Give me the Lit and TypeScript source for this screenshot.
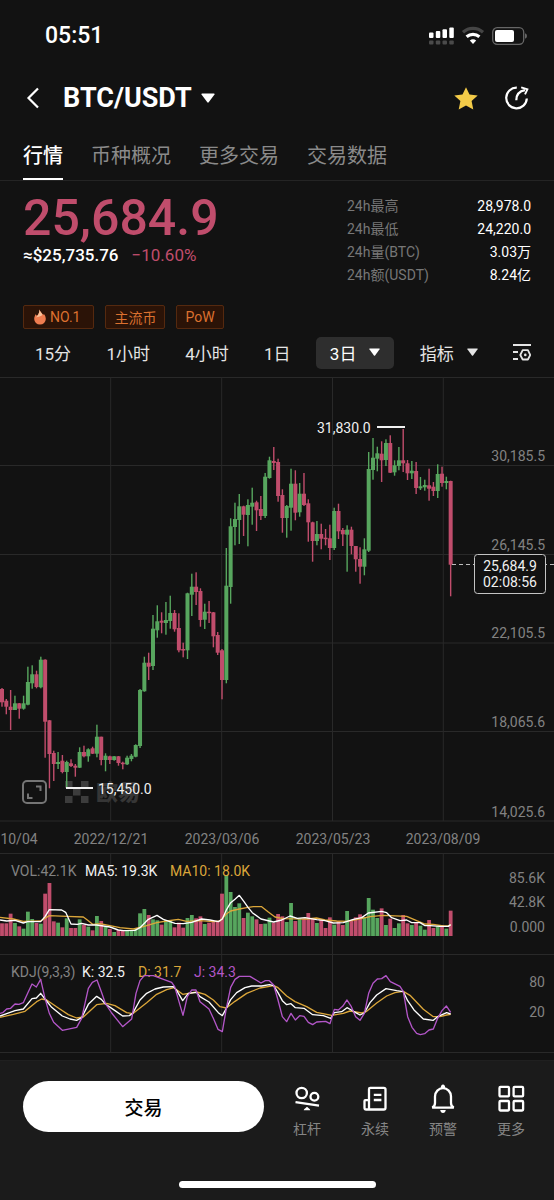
import { LitElement, html, svg, css } from "lit";
import { customElement, state } from "lit/decorators.js";
import { classMap } from "lit/directives/class-map.js";

type Dir = "u" | "d";

const STEP = 4.314;
const FIRST = 2;
const GRID_X = [110.7, 221.7, 332.5, 443.3];

// direction, high, body top, body bottom, low, volume bar top (volume in third-pixels)
const CANDLES: [Dir, number, number, number, number, number][] = [
  ["d", 688, 689, 702.3, 706.7, 220],
  ["d", 699, 700.7, 706.7, 714.3, 220],
  ["d", 690, 706.7, 710, 730, 191],
  ["u", 695.7, 703.3, 710, 710, 219],
  ["d", 703, 703.3, 708.7, 718.7, 229],
  ["u", 695.7, 703.3, 708.7, 709.7, 236],
  ["u", 666.7, 682, 704.7, 705.3, 185],
  ["u", 665.3, 674.3, 683.3, 688.7, 207],
  ["d", 670.7, 674.3, 687, 688.3, 219],
  ["u", 656.7, 659.7, 687.3, 688.3, 221],
  ["d", 659.3, 659.7, 721.7, 757.7, 131],
  ["d", 720, 720.3, 754, 788.3, 99],
  ["d", 750.7, 753, 764, 781, 214],
  ["u", 752, 762, 764, 769, 218],
  ["d", 755, 760.7, 772, 773.3, 232],
  ["u", 760.7, 762, 772, 787.7, 205],
  ["d", 759.3, 763.3, 766, 767, 234],
  ["d", 764, 765.7, 767.7, 776.7, 234],
  ["u", 747.3, 752, 767.7, 768, 208],
  ["d", 745.7, 752, 756.3, 757.3, 224],
  ["u", 748.3, 749.3, 756.3, 761.7, 230],
  ["d", 746.7, 748.3, 753.7, 754, 241],
  ["u", 724.7, 736.7, 753.7, 757.3, 198],
  ["d", 736.7, 736.7, 760, 765.3, 213],
  ["u", 753.3, 755.7, 760, 771.3, 231],
  ["d", 755.7, 756.3, 760, 764, 237],
  ["u", 756, 756.3, 760, 760.7, 246],
  ["d", 756, 756.3, 763, 765.7, 240],
  ["d", 761.7, 762.7, 764, 769.3, 241],
  ["u", 755.7, 757.7, 764.3, 765, 241],
  ["u", 754, 755.7, 759, 761.3, 241],
  ["u", 744.3, 745, 756.7, 757.3, 237],
  ["u", 689, 690, 746, 748, 190],
  ["u", 656.7, 662.7, 691.3, 691.7, 177],
  ["d", 652.7, 662.7, 666.7, 680, 195],
  ["u", 615, 628.7, 666, 670, 208],
  ["u", 605.3, 621.3, 630.3, 637.7, 211],
  ["d", 612.3, 620.7, 622.7, 633.3, 224],
  ["u", 602, 620, 623, 634.7, 210],
  ["u", 595.7, 613, 621, 628.7, 211],
  ["d", 610, 613, 629.3, 631.7, 232],
  ["d", 613.3, 628, 650.3, 652.3, 218],
  ["d", 642.7, 649, 650.3, 657.3, 233],
  ["u", 592.7, 593.3, 650.3, 659, 204],
  ["u", 573.7, 586.7, 594.7, 616, 195],
  ["d", 572.3, 586.7, 592, 605, 205],
  ["d", 588.3, 591, 620, 626.7, 199],
  ["u", 603.7, 611.7, 619.7, 629, 222],
  ["d", 601, 611.7, 613, 623, 218],
  ["d", 612, 612.3, 636.3, 647.3, 216],
  ["d", 632, 635, 652.7, 655, 216],
  ["d", 649, 650.3, 680, 699.3, 131],
  ["u", 548, 585.7, 680, 683.3, 75],
  ["u", 518.3, 526.3, 587, 603.7, 126],
  ["u", 502.7, 519, 527, 545.3, 171],
  ["u", 494, 506.3, 520, 544, 160],
  ["d", 505.7, 506.3, 514.7, 536, 204],
  ["u", 499.3, 505, 515, 546.3, 188],
  ["u", 487.7, 502.7, 506.7, 524.7, 199],
  ["d", 500.7, 502.3, 510.3, 531, 208],
  ["d", 496, 509, 516, 520, 222],
  ["u", 473, 476.7, 516, 518, 221],
  ["u", 456.7, 460.3, 478, 478.7, 203],
  ["d", 447, 461, 463, 470, 218],
  ["d", 458.7, 462, 496, 501.7, 192],
  ["d", 489.3, 495, 518, 532.7, 199],
  ["u", 505, 506, 518, 537.7, 216],
  ["u", 468.7, 483.7, 507.7, 530.7, 159],
  ["d", 470.3, 483.7, 512.7, 520.3, 213],
  ["u", 483, 493.7, 512.3, 516.7, 206],
  ["d", 473, 493.7, 505, 506, 206],
  ["d", 499.3, 503.3, 522.3, 541.7, 189],
  ["d", 521.7, 522.3, 541, 561.7, 205],
  ["u", 521, 534, 541, 545.3, 219],
  ["d", 523.7, 534, 538.7, 549.3, 209],
  ["d", 529, 537.7, 539, 545.3, 234],
  ["d", 524.7, 538.3, 548, 560, 202],
  ["u", 507.7, 511, 548, 550, 224],
  ["d", 503.7, 511, 531.3, 539, 213],
  ["d", 528, 530, 534.3, 546, 225],
  ["u", 525.3, 529.7, 534.7, 571.7, 183],
  ["d", 526.7, 529.7, 546, 554.3, 210],
  ["d", 546, 546, 559.3, 571.7, 202],
  ["d", 547.3, 559, 566.7, 583.7, 193],
  ["u", 538.3, 549.3, 566.7, 575.3, 201],
  ["u", 452, 469, 550.7, 552, 144],
  ["u", 438, 457.7, 470, 479.7, 179],
  ["u", 446.7, 453.3, 458.7, 471.3, 204],
  ["d", 441.3, 453.7, 460.3, 482, 175],
  ["u", 439.3, 443, 460, 466, 225],
  ["d", 435.3, 443, 472.7, 473, 206],
  ["u", 460.3, 465.3, 472.3, 475.7, 234],
  ["u", 447, 460.3, 466, 470.3, 220],
  ["d", 429, 460.3, 463.3, 472, 195],
  ["d", 460, 463.3, 473.3, 480, 220],
  ["u", 461, 470.7, 473.3, 479, 225],
  ["d", 462, 471, 488, 494, 216],
  ["u", 477, 486.3, 488.3, 490, 227],
  ["u", 479.7, 485, 487.3, 490.7, 239],
  ["d", 468.7, 485.3, 488.7, 500.7, 210],
  ["d", 482, 486.7, 491, 496, 234],
  ["u", 464.3, 474, 491, 498, 229],
  ["d", 466.7, 473.7, 483, 486.7, 225],
  ["u", 476.7, 481, 483, 489.3, 236],
  ["d", 480.7, 481, 564.7, 596.3, 182],
];

// Indicator lines, in third-pixels
const MA5 =
  "0,210 20,213 45,211 70,219 83,215 122,215 135,200 148,179 185,180 197,187 213,222 232,223 245,220 265,225 290,225 330,231 355,240 370,242 405,241 420,233 445,208 471,196 490,208 525,220 550,221 575,217 605,207 630,210 655,215 667,207 679,180 692,158 705,148 718,136 732,155 744,172 757,188 783,207 821,216 845,210 870,198 892,205 915,203 950,209 975,212 1000,219 1030,218 1060,208 1085,203 1105,189 1145,184 1160,188 1175,203 1200,212 1220,210 1235,218 1260,218 1275,227 1290,227 1320,229 1345,229 1352,224";
const MA10 =
  "0,202 40,207 70,214 122,213 148,197 200,199 250,201 262,210 278,223 300,221 330,227 360,233 400,237 430,230 470,218 500,213 535,208 560,214 600,212 640,215 660,213 679,192 692,183 718,177 740,173 760,170 785,170 805,186 825,201 850,206 920,207 950,204 975,210 1010,213 1040,214 1070,209 1110,200 1150,196 1220,199 1250,212 1275,222 1300,223 1330,228 1345,228 1352,224";
const K_LINE =
  "0,498 20,491 45,482 70,477 96,446 109,444 122,430 135,447 155,472 187,498 210,507 230,511 245,503 265,463 290,439 304,448 316,462 345,482 368,498 388,497 398,490 420,450 440,430 465,417 490,411 520,410 530,421 548,452 565,430 590,427 600,440 627,456 655,488 667,497 679,475 692,449 710,428 735,413 755,408 785,408 808,404 821,407 834,428 847,452 860,464 873,461 886,473 912,475 938,494 970,497 992,505 1003,488 1025,485 1041,473 1054,480 1067,488 1080,495 1093,489 1110,458 1130,435 1158,416 1190,422 1210,425 1223,452 1242,480 1270,507 1300,511 1313,500 1340,488 1352,492";
const D_LINE =
  "0,502 40,493 75,484 110,455 125,447 140,450 175,474 205,494 230,504 250,501 290,464 320,460 345,467 380,488 398,491 440,458 470,433 500,419 522,413 548,433 590,426 615,433 640,450 660,470 679,474 705,454 740,430 780,414 821,407 834,413 860,438 885,455 920,470 950,487 995,496 1030,490 1050,483 1085,489 1100,484 1130,459 1160,438 1185,428 1210,424 1230,436 1270,478 1300,500 1320,500 1340,495 1352,493";
const J_LINE =
  "0,490 8,488 20,477 32,475 45,462 57,463 70,458 83,430 96,402 109,411 122,388 135,445 148,490 161,517 187,541 230,532 245,505 265,415 277,397 291,390 304,425 316,460 335,489 368,530 395,507 408,430 420,392 433,377 460,377 515,397 524,410 537,455 549,496 562,440 575,420 588,420 600,455 627,477 640,505 654,538 667,545 679,475 692,412 705,388 718,379 750,379 783,399 796,392 808,392 821,405 834,450 847,500 860,515 873,490 886,510 899,497 912,499 925,517 938,524 950,516 977,514 990,521 1003,478 1015,480 1028,469 1041,450 1054,470 1067,500 1080,511 1093,490 1106,430 1119,400 1132,387 1145,386 1158,377 1171,395 1200,409 1210,425 1223,500 1236,532 1250,550 1261,554 1274,551 1287,540 1300,537 1313,505 1326,482 1339,468 1352,487";

@customElement("market-charts")
export class MarketCharts extends LitElement {
  static styles = css`
    :host {
      display: block;
    }
    .chart {
      display: block;
      width: 100%;
      font-family: Roboto, "Noto Sans CJK SC", sans-serif;
      font-size: 14px;
    }
    .grid {
      stroke: #292929;
      stroke-width: 1;
    }
    .u {
      fill: #57a65e;
    }
    .d {
      fill: #c04d6c;
    }
    .axis,
    .muted {
      fill: #828282;
    }
    .axis {
      text-anchor: end;
    }
    .date {
      fill: #828282;
      text-anchor: middle;
    }
    .light {
      fill: #f0f0f0;
    }
    .tag {
      fill: #f0f0f0;
      text-anchor: middle;
    }
    .pointer {
      stroke: #f0f0f0;
      stroke-width: 2;
    }
    .dash {
      stroke: #bdbdbd;
      stroke-dasharray: 4 3;
    }
    .tag-box {
      fill: #121212;
      stroke: #c4c4c4;
    }
    .mark {
      fill: #3c3c3c;
    }
    .mark-text {
      fill: #363636;
      font-size: 22px;
      font-weight: 900;
    }
    .expand {
      fill: none;
      stroke: #757575;
      stroke-width: 2;
    }
    .line {
      fill: none;
      stroke-width: 4;
      stroke-linejoin: round;
    }
    .white {
      stroke: #fff;
    }
    .gold {
      stroke: #dba63a;
    }
    .violet {
      stroke: #b356c8;
    }
    .gold-text {
      fill: #dba63a;
    }
    .violet-text {
      fill: #b356c8;
    }
  `;

  private columns(top: number, bottom: number) {
    return GRID_X.map((x) => svg`<line class="grid" x1=${x} x2=${x} y1=${top} y2=${bottom} />`);
  }

  private row(y: number) {
    return svg`<line class="grid" x1="0" x2="554" y1=${y} y2=${y} />`;
  }

  private priceChart() {
    const checks = [[0, 0], [2, 0], [1, 1], [0, 2], [2, 2]];
    const levels: [string, number][] = [
      ["30,185.5", 461], ["26,145.5", 550], ["22,105.5", 638], ["18,065.6", 727], ["14,025.6", 817],
    ];
    const dates: [string, number][] = [
      ["10/04", 19], ["2022/12/21", 111], ["2023/03/06", 222], ["2023/05/23", 333], ["2023/08/09", 443],
    ];
    return html`<svg class="chart" viewBox="0 377 554 476" role="img" aria-label="BTC/USDT 3日 K线">
      ${[377.5, 465.5, 554.5, 643, 731.5, 821].map((y) => this.row(y))}
      ${this.columns(377, 821)}
      ${checks.map(([c, r]) => svg`<rect class="mark" x=${65 + c * 8} y=${781 + r * 7.5} width="7.5" height="7" />`)}
      <text class="mark-text" x="96" y="800">欧易</text>
      ${CANDLES.map(([dir, high, top, bottom, low], i) => {
        const x = FIRST + i * STEP;
        return svg`<rect class=${dir} x=${x - 0.7} y=${high} width="1.4" height=${low - high} />
          <rect class=${dir} x=${x - 2} y=${top} width="4" height=${Math.max(bottom - top, 1.5)} />`;
      })}
      <g class="expand">
        <rect x="23" y="781" width="23" height="22" rx="4" />
        <path d="M36 786.500h4.500v4.500M28 793.500v4.500h4.500" />
      </g>
      <line class="pointer" x1="66" x2="93" y1="788" y2="788" />
      <text class="light" x="98" y="794">15,450.0</text>
      <text class="light" x="317" y="433">31,830.0</text>
      <line class="pointer" x1="377" x2="405" y1="427" y2="427" />
      ${levels.map(([t, y]) => svg`<text class="axis" x="545" y=${y}>${t}</text>`)}
      <line class="dash" x1="452" x2="554" y1="564.5" y2="564.5" />
      <rect class="tag-box" x="474.500" y="554.500" width="71" height="39" rx="3" />
      <text class="tag" x="510" y="571">25,684.9</text>
      <text class="tag" x="510" y="587">02:08:56</text>
      ${dates.map(([t, x]) => svg`<text class="date" x=${x} y="844">${t}</text>`)}
    </svg>`;
  }

  private volumeChart() {
    return html`<svg class="chart" viewBox="0 853 554 101" role="img" aria-label="成交量">
      ${this.row(853.5)} ${this.columns(853, 954)}
      <text class="muted" x="11" y="876">VOL:42.1K</text>
      <text class="light" x="85" y="876">MA5: 19.3K</text>
      ${CANDLES.map(
        ([dir, , , , , top], i) =>
          svg`<rect class=${dir} x=${FIRST + i * STEP - 1.9} y=${850 + top / 3} width="3.8" height=${(258 - top) / 3} />`,
      )}
      <text class="gold-text" x="170" y="876">MA10: 18.0K</text>
      <g transform="translate(0 850) scale(0.33333)">
        <polyline class="line gold" points=${MA10} />
        <polyline class="line white" points=${MA5} />
      </g>
      <text class="axis" x="545" y="883">85.6K</text>
      <text class="axis" x="545" y="907">42.8K</text>
      <text class="axis" x="545" y="932">0.000</text>
    </svg>`;
  }

  private kdjChart() {
    return html`<svg class="chart" viewBox="0 954 554 106" role="img" aria-label="KDJ">
      ${this.row(954.5)} ${this.row(1052.5)} ${this.columns(954, 1053)}
      <text class="muted" x="11" y="977">KDJ(9,3,3)</text>
      <text class="light" x="82" y="977">K: 32.5</text>
      <text class="gold-text" x="138" y="977">D: 31.7</text>
      <text class="violet-text" x="194" y="977">J: 34.3</text>
      <g transform="translate(0 850) scale(0.33333)">
        <polyline class="line gold" points=${D_LINE} />
        <polyline class="line white" points=${K_LINE} />
        <polyline class="line violet" points=${J_LINE} />
      </g>
      <text class="axis" x="545" y="987">80</text>
      <text class="axis" x="545" y="1017">20</text>
    </svg>`;
  }

  render() {
    return html`${this.priceChart()}${this.volumeChart()}${this.kdjChart()}`;
  }
}

@customElement("app-root")
export class AppRoot extends LitElement {
  static styles = css`
    :host {
      display: flex;
      flex-direction: column;
      min-height: 100vh;
      background: #121212;
      color: #fff;
      font-family: Roboto, "Noto Sans CJK SC", sans-serif;
    }
    * {
      box-sizing: border-box;
    }
    button {
      padding: 0;
      border: 0;
      background: none;
      color: inherit;
      font: inherit;
      cursor: pointer;
    }
    svg {
      display: block;
    }
    .status {
      display: flex;
      align-items: center;
      height: 72px;
      padding: 0 27px 0 45px;
    }
    .clock {
      flex: 1;
      font-size: 23px;
      font-weight: 500;
      line-height: 28px;
    }
    .header {
      display: flex;
      align-items: center;
      height: 52px;
      padding: 0 25px 0 26px;
    }
    .pair {
      display: flex;
      align-items: center;
      gap: 9px;
      margin-left: 23px;
      font-size: 27px;
      font-weight: 700;
      line-height: 32px;
    }
    .title {
      margin: 0;
      font: inherit;
    }
    .spacer {
      flex: 1;
    }
    .fav {
      margin-right: 26px;
    }
    .tabs {
      display: flex;
      gap: 28px;
      height: 57px;
      padding: 0 23px;
      border-bottom: 1px solid #242424;
    }
    .tab {
      height: 56px;
      padding-top: 6px;
      border-bottom: 2px solid transparent;
      color: #8a8a8a;
      font-size: 20px;
    }
    .tab.on {
      border-color: #fff;
      color: #fff;
      font-weight: 500;
    }
    .quote {
      display: flex;
      justify-content: space-between;
      padding: 12px 23px 0;
    }
    .price {
      color: #c04d6c;
      font-size: 50px;
      font-weight: 500;
      line-height: 50px;
    }
    .sub {
      display: flex;
      gap: 13px;
      font-size: 17px;
      font-weight: 500;
      line-height: 24px;
    }
    .change {
      color: #c04d6c;
      font-weight: 400;
    }
    .stats {
      display: grid;
      grid-template-columns: 1fr auto;
      width: 184px;
      margin: 0;
      padding-top: 2px;
      font-size: 14px;
      line-height: 23px;
    }
    .stats dt {
      color: #777;
    }
    .stats dd {
      margin: 0;
      text-align: right;
    }
    .badges {
      display: flex;
      gap: 11px;
      padding: 18px 23px 0;
    }
    .badge {
      display: flex;
      align-items: center;
      gap: 4px;
      height: 24px;
      padding: 0 8px;
      border: 1px solid #55290f;
      border-radius: 2px;
      background: #2b1307;
      color: #dc712f;
      font-size: 14px;
    }
    .badge.rank {
      padding: 0 13px 0 10px;
    }
    .frames {
      display: flex;
      align-items: center;
      justify-content: space-between;
      height: 48px;
      padding: 0 23px 0 35px;
      color: #e4e4e4;
      font-size: 17px;
    }
    .frame {
      display: flex;
      align-items: center;
      gap: 13px;
      height: 32px;
      padding-bottom: 2px;
    }
    .frame.on {
      margin: 0 -10px;
      padding: 0 14px 2px;
      border-radius: 5px;
      background: #2e2e2e;
      color: #fff;
    }
    .dock {
      display: flex;
      flex: 1;
      flex-direction: column;
      align-items: center;
      justify-content: space-between;
      padding: 20px 0 12px;
      border-top: 1px solid #202020;
      background: #1b1b1b;
    }
    .actions {
      display: flex;
      align-items: flex-start;
      width: 100%;
      padding: 0 9px 0 23px;
    }
    .trade {
      flex: 1;
      height: 51px;
      margin-right: 9px;
      border-radius: 26px;
      background: #fff;
      color: #000;
      font-size: 19px;
      font-weight: 500;
    }
    .action {
      display: flex;
      flex-direction: column;
      align-items: center;
      gap: 5px;
      width: 68px;
      padding-top: 2px;
      color: #858585;
      font-size: 14px;
      line-height: 20px;
    }
    .home {
      width: 197px;
      height: 7px;
      border-radius: 4px;
      background: #fff;
    }
  `;

  @state() private tab = "行情";
  @state() private frame = "3日";

  private caret(w: number, h: number) {
    return html`<svg width=${w} height=${h} viewBox="0 0 14 10" aria-hidden="true">
      <path fill="currentColor" d="M1 0.500h12q1 0 .5.900L7.700 9.300q-.7.900-1.400 0L.5 1.400Q0 .5 1 .5z" />
    </svg>`;
  }

  private statusIcons() {
    return html`<svg width="100" height="20" viewBox="0 0 100 20" aria-hidden="true">
      <g fill="#fff">
        <rect x="2" y="6.500" width="4.500" height="5.500" rx="1" />
        <rect x="8.800" y="5" width="4.500" height="7" rx="1" />
        <rect x="15.500" y="3.200" width="4.500" height="8.800" rx="1" />
        <rect x="22.300" y="1.500" width="4.500" height="10.500" rx="1" />
      </g>
      <g fill="#4a4a4a">
        <rect x="2" y="14.500" width="4.500" height="4" rx="1" />
        <rect x="8.800" y="14.500" width="4.500" height="4" rx="1" />
        <rect x="15.500" y="14.500" width="4.500" height="4" rx="1" />
        <rect x="22.300" y="14.500" width="4.500" height="4" rx="1" />
      </g>
      <path d="M36 6.200a15 15 0 0 1 20 0" fill="none" stroke="#454545" stroke-width="3.200" />
      <path d="M39.600 10.700a10 10 0 0 1 12.800 0" fill="none" stroke="#fff" stroke-width="3.200" />
      <path d="M42.800 14.500a5.200 5.200 0 0 1 6.400 0L46 18z" fill="#fff" />
      <rect x="65.700" y="1.700" width="31" height="16.600" rx="4.500" fill="none" stroke="#666" stroke-width="1.300" />
      <rect x="68" y="4" width="19" height="12" rx="2" fill="#fff" />
      <path d="M98 7.200q2 .8 2 2.800t-2 2.800z" fill="#666" />
    </svg>`;
  }

  private actionIcon(name: string) {
    const shapes: Record<string, unknown> = {
      杠杆: svg`<circle cx="8.700" cy="10" r="5.200" /><circle cx="21.400" cy="13.800" r="3.900" />
        <path d="M2.500 19.200l23.500 3.400" /><path d="M10.700 27.300q.2-1 1.300-1.800l2-1.800 2 1.800q1.100.8 1.300 1.800z" fill="#fff" stroke="none" />`,
      永续: svg`<path d="M8 26.500V6q0-1.200 1.200-1.200h13.600Q24.500 4.800 24.500 6.500v18.300q0 1.700-1.700 1.700H5.200q-1.700 0-1.700-1.700V18q0-.8.8-.8H8M12.800 11.800h7.600M12.800 17h7.600" />`,
      预警: svg`<path d="M3.200 24.600q2.800-1.200 2.800-4.500V13.500a8 8.300 0 0 1 16 0v6.600q0 3.300 2.800 4.500z" />
        <path d="M11.800 5q0-3.500 2.200-3.500T16.200 5zM11.200 27h5.600q-.5 3-2.800 3t-2.800-3z" fill="#fff" stroke="none" />`,
      更多: svg`<rect x="2.500" y="3.900" width="9.500" height="9.500" rx="1" /><rect x="16.600" y="3.900" width="9.500" height="9.500" rx="1" />
        <rect x="2.500" y="18" width="9.500" height="9.500" rx="1" /><rect x="16.600" y="18" width="9.500" height="9.500" rx="1" />`,
    };
    return html`<svg width="28" height="31" viewBox="0 0 28 31" fill="none" stroke="#fff" stroke-width="2.300" aria-hidden="true">
      ${shapes[name]}
    </svg>`;
  }

  render() {
    const stats = [
      ["24h最高", "28,978.0"],
      ["24h最低", "24,220.0"],
      ["24h量(BTC)", "3.03万"],
      ["24h额(USDT)", "8.24亿"],
    ];
    return html`
      <div class="status"><span class="clock">05:51</span>${this.statusIcons()}</div>
      <header class="header">
        <button aria-label="返回">
          <svg width="14" height="22" viewBox="0 0 14 22" fill="none" stroke="#fff" stroke-width="2.200">
            <path d="M12 1.500L2.500 11l9.500 9.500" />
          </svg>
        </button>
        <button class="pair"><h1 class="title">BTC/USDT</h1>${this.caret(14, 10)}</button>
        <span class="spacer"></span>
        <button class="fav" aria-label="收藏">
          <svg width="24" height="25" viewBox="0 0 24 25">
            <path fill="#f3cb48" d="M12 1.300l3.500 7.200 8.200.9-6.100 5.500 1.700 8.600L12 19.400l-7.300 4.100 1.700-8.600L.3 9.400l8.200-.9z" />
          </svg>
        </button>
        <button aria-label="分享">
          <svg width="25" height="26" viewBox="0 0 25 26" fill="none" stroke="#fff" stroke-width="2.200">
            <path d="M12.800 2.700A10.300 10.300 0 1 0 22.800 13.500" />
            <path d="M12.300 15.200c0-5 2.800-8.900 8.700-10" />
            <path d="M17.200 2.300l6.200 2.100-2.400 5" stroke-width="1.900" />
          </svg>
        </button>
      </header>
      <nav class="tabs">
        ${["行情", "币种概况", "更多交易", "交易数据"].map(
          (t) => html`<button class=${classMap({ tab: true, on: t === this.tab })} @click=${() => (this.tab = t)}>${t}</button>`,
        )}
      </nav>
      <section class="quote">
        <div>
          <div class="price">25,684.9</div>
          <div class="sub"><span>≈$25,735.76</span><span class="change">−10.60%</span></div>
        </div>
        <dl class="stats">${stats.map(([k, v]) => html`<dt>${k}</dt><dd>${v}</dd>`)}</dl>
      </section>
      <div class="badges">
        <span class="badge rank">
          <svg width="12" height="16" viewBox="0 0 12 16" aria-hidden="true">
            <path fill="#ef7d50" d="M5.500 0.500c.6 2.600 2.800 3.700 3.700 5.500.4-.3.500-.8.500-1.300 1.500 1.500 2.100 3.400 2.100 5.300a5.800 5.500 0 0 1-11.600 0c0-2 .8-3.200 1.400-4.700.6.400.9.900 1.100 1.500C4.500 5.500 5.500 3.500 5.500.5z" />
            <path fill="#f8c29a" d="M5.500 0.500c.5 2.300 2.200 3.500 3 5C7.500 7.500 4 7.500 2 8.500 3.500 7 5.500 4.500 5.500.5z" />
          </svg>
          NO.1
        </span>
        <span class="badge">主流币</span>
        <span class="badge">PoW</span>
      </div>
      <div class="frames">
        ${["15分", "1小时", "4小时", "1日", "3日"].map(
          (f) => html`<button class=${classMap({ frame: true, on: f === this.frame })} @click=${() => (this.frame = f)}>
            ${f}${f === "3日" ? this.caret(11, 8) : null}
          </button>`,
        )}
        <button class="frame">指标${this.caret(11, 8)}</button>
        <button class="frame" aria-label="设置">
          <svg width="18" height="18" viewBox="0 0 18 18" fill="none" stroke="#e4e4e4" stroke-width="1.800">
            <path d="M0 2h18M0 9h5M0 16h5" />
            <path d="M9.700 7.200h5.200L17.300 12l-2.400 4.500H9.700L7.300 12z" stroke-linejoin="round" />
            <circle cx="12.300" cy="11.900" r="1.300" fill="#e4e4e4" stroke="none" />
          </svg>
        </button>
      </div>
      <market-charts></market-charts>
      <footer class="dock">
        <div class="actions">
          <button class="trade">交易</button>
          ${["杠杆", "永续", "预警", "更多"].map(
            (a) => html`<button class="action">${this.actionIcon(a)}<span>${a}</span></button>`,
          )}
        </div>
        <div class="home"></div>
      </footer>
    `;
  }
}
